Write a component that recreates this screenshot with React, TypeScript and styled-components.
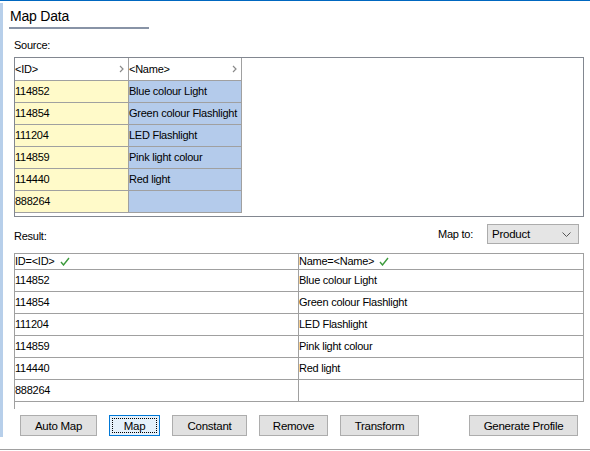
import React from "react";
import styled, { createGlobalStyle } from "styled-components";

const GlobalStyle = createGlobalStyle`
  html, body { margin: 0; padding: 0; background: #fff; }
  body {
    font-family: "Liberation Sans", "DejaVu Sans", sans-serif;
    font-size: 11px;
    letter-spacing: -0.25px;
    color: #000;
  }
  * { box-sizing: border-box; }
`;

const Page = styled.div`
  width: 590px;
  height: 450px;
  border-top: 1px solid #0067c0;
  border-bottom: 1px solid #a0a0a0;
  display: flex;
  background: #fff;
`;

const Strip = styled.div`
  width: 3px;
  height: 434px;
  margin-top: 2px;
  background: #b7cfea;
`;

const Content = styled.div`
  flex: 1;
  display: flex;
  flex-direction: column;
`;

const Title = styled.div`
  margin: 4px 0 0 6px;
  width: 140px;
  height: 24px;
  padding-left: 1px;
  line-height: 22px;
  font-size: 14px;
  letter-spacing: -0.2px;
  color: #000;
  border-bottom: 2px solid #8893a6;
`;

const Label = styled.div`
  margin-left: 11px;
  line-height: 14px;
`;

const SourceLabel = styled(Label)`
  margin-top: 9px;
  margin-bottom: 5px;
`;

const SourceBox = styled.div`
  margin-left: 11px;
  width: 570px;
  height: 160px;
  border: 1px solid #828790;
  display: flex;
  flex-direction: column;
`;

const Row = styled.div`
  display: flex;
`;

const Cell = styled.div<{ w: number; h: number; bg?: string }>`
  width: ${({ w }) => w}px;
  height: ${({ h }) => h}px;
  background: ${({ bg }) => bg || "#fff"};
  border-right: 1px solid #a0a0a0;
  border-bottom: 1px solid #a0a0a0;
  padding: 0 0 1px 0;
  display: flex;
  align-items: center;
  white-space: nowrap;
  overflow: hidden;
`;

const HeadCell = styled(Cell)`
  justify-content: space-between;
  padding-right: 4px;
`;

const ResultBar = styled.div`
  height: 36px;
  margin-left: 11px;
  width: 570px;
  padding: 7px 5px 9px 0;
  display: flex;
  justify-content: space-between;
`;

const ResultLabel = styled.div`
  align-self: flex-end;
  line-height: 14px;
  margin-bottom: 1px;
`;

const MapTo = styled.div`
  display: flex;
  align-items: center;
  gap: 14px;
`;

const Select = styled.div`
  width: 92px;
  height: 20px;
  background: #e5e5e5;
  border: 1px solid #acacac;
  padding: 0 7px 0 4px;
  display: flex;
  align-items: center;
  justify-content: space-between;
  font-size: 11.5px;
`;

const ResultBox = styled.div`
  margin-left: 11px;
  width: 570px;
  height: 156px;
  border-left: 1px solid #a0a0a0;
  border-top: 1px solid #a0a0a0;
`;

const Check = styled.svg`
  margin-left: 5px;
`;

const Buttons = styled.div`
  margin: 6px 0 0 17px;
  width: 558px;
  display: flex;
  gap: 12px;
`;

const Button = styled.button<{ w: number; focused?: boolean; push?: boolean }>`
  width: ${({ w }) => w}px;
  height: 21px;
  margin-left: ${({ push }) => (push ? "auto" : "0")};
  font-family: inherit;
  font-size: 11.5px;
  letter-spacing: -0.25px;
  color: #000;
  padding: 0;
  background: ${({ focused }) => (focused ? "#e5f1fb" : "#e1e1e1")};
  border: 1px solid ${({ focused }) => (focused ? "#0078d7" : "#adadad")};
  outline: ${({ focused }) => (focused ? "1px dotted #000" : "none")};
  outline-offset: -4px;
`;

const Chevron = () => (
  <svg width="5" height="8" viewBox="0 0 5 8">
    <path d="M1 1 L4 4 L1 7" fill="none" stroke="#8a8a8a" strokeWidth="1.2" />
  </svg>
);

const CheckMark = () => (
  <Check width="10" height="9" viewBox="0 0 10 9">
    <path d="M1 5 L3.5 8 L9 1" fill="none" stroke="#3c9a3c" strokeWidth="1.4" />
  </Check>
);

const rows = [
  ["114852", "Blue colour Light"],
  ["114854", "Green colour Flashlight"],
  ["111204", "LED Flashlight"],
  ["114859", "Pink light colour"],
  ["114440", "Red light"],
  ["888264", ""],
];

const buttons = [
  { label: "Auto Map", w: 77 },
  { label: "Map", w: 51, focused: true },
  { label: "Constant", w: 75 },
  { label: "Remove", w: 69 },
  { label: "Transform", w: 79 },
  { label: "Generate Profile", w: 109, push: true },
];

export default function App() {
  return (
    <>
      <GlobalStyle />
      <Page>
        <Strip />
        <Content>
          <Title>Map Data</Title>
          <SourceLabel>Source:</SourceLabel>
          <SourceBox>
            <Row>
              <HeadCell w={114} h={23}>
                &lt;ID&gt;
                <Chevron />
              </HeadCell>
              <HeadCell w={113} h={23}>
                &lt;Name&gt;
                <Chevron />
              </HeadCell>
            </Row>
            {rows.map(([id, name]) => (
              <Row key={id}>
                <Cell w={114} h={22} bg="#fffac9">
                  {id}
                </Cell>
                <Cell w={113} h={22} bg="#b4cbeb">
                  {name}
                </Cell>
              </Row>
            ))}
          </SourceBox>
          <ResultBar>
            <ResultLabel>Result:</ResultLabel>
            <MapTo>
              <span>Map to:</span>
              <Select>
                Product
                <svg width="9" height="5" viewBox="0 0 9 5">
                  <path d="M0.5 0.5 L4.5 4.5 L8.5 0.5" fill="none" stroke="#555" strokeWidth="1" />
                </svg>
              </Select>
            </MapTo>
          </ResultBar>
          <ResultBox>
            <Row>
              <Cell w={284} h={16}>
                ID=&lt;ID&gt;
                <CheckMark />
              </Cell>
              <Cell w={285} h={16}>
                Name=&lt;Name&gt;
                <CheckMark />
              </Cell>
            </Row>
            {rows.map(([id, name]) => (
              <Row key={id}>
                <Cell w={284} h={22}>
                  {id}
                </Cell>
                <Cell w={285} h={22}>
                  {name}
                </Cell>
              </Row>
            ))}
          </ResultBox>
          <Buttons>
            {buttons.map((b) => (
              <Button key={b.label} w={b.w} focused={b.focused} push={b.push}>
                {b.label}
              </Button>
            ))}
          </Buttons>
        </Content>
      </Page>
    </>
  );
}
